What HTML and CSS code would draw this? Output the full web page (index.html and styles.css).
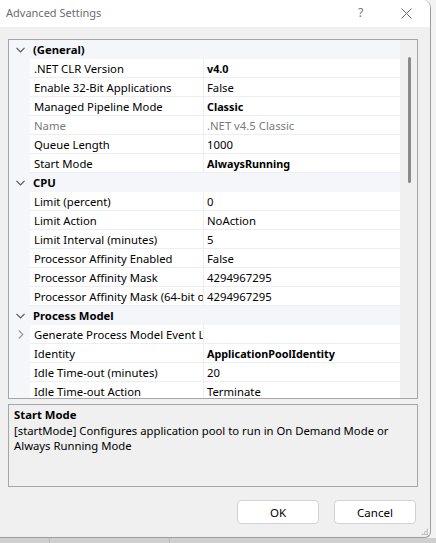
FILE: index.html
```html
<!DOCTYPE html>
<html>
<head>
<meta charset="utf-8">
<link rel="stylesheet" href="styles.css">
</head>
<body>
<div class="desktop">
  <div class="window">
    <div class="titlebar">
      <span class="title">Advanced Settings</span>
      <span class="help">?</span>
      <span class="close"><svg width="11" height="11" viewBox="0 0 11 11"><path d="M0.5 0.5 L10.5 10.5 M10.5 0.5 L0.5 10.5" stroke="#6a6a6a" stroke-width="1" fill="none"/></svg></span>
    </div>
    <div class="content">
      <div class="grid">
        <div class="rows">
          <div class="cat"><span class="tog"><svg width="9" height="6" viewBox="0 0 9 6"><path d="M0.5 0.8 L4.5 4.8 L8.5 0.8" stroke="#555" stroke-width="1.2" fill="none"/></svg></span><span class="cat-name">(General)</span></div>
          <div class="row"><span class="gut"></span><span class="name">.NET CLR Version</span><span class="val b">v4.0</span></div>
          <div class="row"><span class="gut"></span><span class="name">Enable 32-Bit Applications</span><span class="val">False</span></div>
          <div class="row"><span class="gut"></span><span class="name">Managed Pipeline Mode</span><span class="val b">Classic</span></div>
          <div class="row ro"><span class="gut"></span><span class="name">Name</span><span class="val">.NET v4.5 Classic</span></div>
          <div class="row"><span class="gut"></span><span class="name">Queue Length</span><span class="val">1000</span></div>
          <div class="row"><span class="gut"></span><span class="name">Start Mode</span><span class="val b">AlwaysRunning</span></div>
          <div class="cat"><span class="tog"><svg width="9" height="6" viewBox="0 0 9 6"><path d="M0.5 0.8 L4.5 4.8 L8.5 0.8" stroke="#555" stroke-width="1.2" fill="none"/></svg></span><span class="cat-name">CPU</span></div>
          <div class="row"><span class="gut"></span><span class="name">Limit (percent)</span><span class="val">0</span></div>
          <div class="row"><span class="gut"></span><span class="name">Limit Action</span><span class="val">NoAction</span></div>
          <div class="row"><span class="gut"></span><span class="name">Limit Interval (minutes)</span><span class="val">5</span></div>
          <div class="row"><span class="gut"></span><span class="name">Processor Affinity Enabled</span><span class="val">False</span></div>
          <div class="row"><span class="gut"></span><span class="name">Processor Affinity Mask</span><span class="val">4294967295</span></div>
          <div class="row"><span class="gut"></span><span class="name"><span class="clip">Processor Affinity Mask (64-bit option)</span></span><span class="val">4294967295</span></div>
          <div class="cat"><span class="tog"><svg width="9" height="6" viewBox="0 0 9 6"><path d="M0.5 0.8 L4.5 4.8 L8.5 0.8" stroke="#555" stroke-width="1.2" fill="none"/></svg></span><span class="cat-name">Process Model</span></div>
          <div class="row"><span class="gut"><svg width="6" height="9" viewBox="0 0 6 9"><path d="M0.8 0.5 L4.8 4.5 L0.8 8.5" stroke="#9a9a9a" stroke-width="1.2" fill="none"/></svg></span><span class="name"><span class="clip">Generate Process Model Event Log Entry</span></span><span class="val"></span></div>
          <div class="row"><span class="gut"></span><span class="name">Identity</span><span class="val b">ApplicationPoolIdentity</span></div>
          <div class="row"><span class="gut"></span><span class="name">Idle Time-out (minutes)</span><span class="val">20</span></div>
          <div class="row"><span class="gut"></span><span class="name">Idle Time-out Action</span><span class="val">Terminate</span></div>
        </div>
        <div class="scroll"><div class="thumb"></div></div>
      </div>
      <div class="desc">
        <div class="desc-title">Start Mode</div>
        <div class="desc-text">[startMode] Configures application pool to run in On Demand Mode or Always Running Mode</div>
      </div>
      <div class="buttons">
        <button class="btn">OK</button>
        <button class="btn">Cancel</button>
      </div>
    </div>
    <div class="grip"></div>
  </div>
  <div class="taskbar"><span class="tb-seg a"></span><span class="tb-seg b"></span></div>
</div>
</body>
</html>
```
FILE: styles.css
```css
* { box-sizing: border-box; }
html, body { margin: 0; padding: 0; }
body {
  width: 436px;
  height: 543px;
  overflow: hidden;
  background: #f3f3f3;
  font-family: "Noto Sans", "Open Sans", sans-serif;
  font-size: 11.3px;
  color: #000;
}
.desktop { width: 436px; height: 543px; display: flex; flex-direction: column; }
.window {
  position: relative;
  width: 431px;
  height: 538px;
  background: #f0f0f0;
  border-right: 1px solid #9c9c9c;
  border-bottom: 1px solid #9c9c9c;
  border-top-right-radius: 8px;
  border-bottom-right-radius: 6px;
  overflow: hidden;
  display: flex;
  flex-direction: column;
}
.titlebar {
  height: 27px;
  background: #ffffff;
  display: flex;
  align-items: center;
  padding-left: 6px;
  padding-bottom: 3px;
  color: #6d6d6d;
  font-size: 11px;
}
.title { flex: 1; }
.help { width: 12px; margin-right: 31px; color: #7a7a7a; font-size: 12.5px; }
.close { width: 11px; height: 11px; margin-right: 18px; display: flex; margin-top: 3px; }
.content { padding: 12px 12px 0 8px; display: flex; flex-direction: column; }
.grid {
  height: 360px;
  border: 1px solid #a6a6a6;
  background: #ffffff;
  display: flex;
  overflow: hidden;
}
.rows { width: 391px; display: flex; flex-direction: column; }
.cat, .row {
  height: 19px;
  flex: none;
  display: grid;
  grid-template-columns: 21px 174px 196px;
  align-items: stretch;
  white-space: nowrap;
}
.cat { background: #f4f6fa; grid-template-columns: 21px 370px; }
.cat-name { font-weight: bold; padding-left: 3px; padding-top: 1px; line-height: 17px; }
.tog, .gut { display: flex; align-items: center; justify-content: center; padding-left: 2px; }
.gut { background: #f4f6fa; }
.tog svg { margin-top: 1px; }
.name, .val {
  padding-top: 1px;
  line-height: 17px;
  overflow: hidden;
  border-bottom: 1px solid #eceef3;
}
.name { padding-left: 4px; border-right: 1px solid #eceef3; }
.val { padding-left: 3px; }
.clip { display: block; width: 169px; overflow: hidden; text-overflow: clip; }
.b { font-weight: bold; font-size: 10.8px; }
.ro .name, .ro .val { color: #7a7a7a; }
.scroll {
  width: 17px;
  background: #f0f0f0;
  padding-top: 17px;
  display: flex;
  justify-content: center;
}
.thumb {
  width: 3px;
  height: 126px;
  background: #8a8a8a;
  border-radius: 2px;
  margin-left: 1px;
}
.desc {
  margin-top: 5px;
  height: 83px;
  border: 1px solid #a6a6a6;
  padding: 1px 5px;
}
.desc-title { font-weight: bold; line-height: 17px; margin-bottom: 0; }
.desc-text { line-height: 15px; }
.buttons {
  margin-top: 13px;
  display: flex;
  justify-content: flex-end;
  gap: 15px;
  padding-right: 2px;
}
.btn {
  width: 82px;
  height: 24px;
  background: #ffffff;
  border: 1px solid #d2d2d2;
  border-radius: 4px;
  font-family: inherit;
  font-size: 11.5px;
  color: #000;
  padding: 0;
}
.grip {
  position: absolute;
  right: 2px;
  bottom: 2px;
  width: 7px;
  height: 7px;
  background:
    radial-gradient(circle, #b0b0b0 0.8px, transparent 1px) 0 0 / 2.5px 2.5px;
  clip-path: polygon(100% 0, 100% 100%, 0 100%);
}
.taskbar {
  flex: 1;
  background: #cfcfcf;
  position: relative;
  display: flex;
}
.tb-seg { display: block; height: 100%; border-right: 1px solid #b8b8b8; }
.tb-seg.a { width: 50px; }
.tb-seg.b { width: 120px; }
```
